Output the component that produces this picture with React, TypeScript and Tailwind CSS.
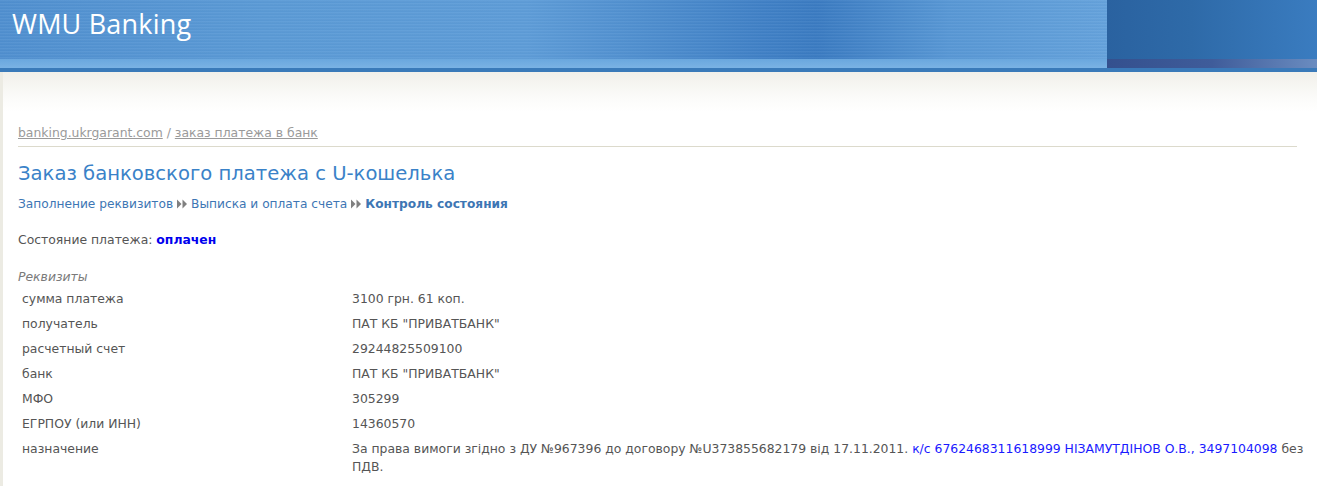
import React from "react";

const rows: [string, React.ReactNode][] = [
  ["сумма платежа", "3100 грн. 61 коп."],
  ["получатель", 'ПАТ КБ "ПРИВАТБАНК"'],
  ["расчетный счет", "29244825509100"],
  ["банк", 'ПАТ КБ "ПРИВАТБАНК"'],
  ["МФО", "305299"],
  ["ЕГРПОУ (или ИНН)", "14360570"],
  [
    "назначение",
    <>
      За права вимоги згідно з ДУ №967396 до договору №U373855682179 від 17.11.2011.{" "}
      <span className="text-[#1a1aff]">к/с 6762468311618999 НІЗАМУТДІНОВ О.В., 3497104098</span> без ПДВ.
    </>,
  ],
];

function Arrows() {
  return (
    <svg width="12" height="10" viewBox="0 0 12 10" className="inline-block mx-[3px] align-[-1px]">
      <path d="M1 0.5 L5.5 5 L1 9.5 Z" fill="#808080" />
      <path d="M6.5 0.5 L11 5 L6.5 9.5 Z" fill="#808080" />
    </svg>
  );
}

export default function App() {
  return (
    <div className="w-[1317px] h-[486px] overflow-hidden bg-white font-['DejaVu_Sans',Verdana,sans-serif]">
      <div className="relative h-[68px] bg-[linear-gradient(90deg,#4f8fd0_0%,#5a9ad6_20%,#5d9cd8_40%,#3f80c6_58%,#3a7bc2_62%,#5797d5_72%,#64a2dc_84%,#5e9dd8_100%)]">
        <div className="absolute inset-0 bg-[repeating-linear-gradient(180deg,rgba(255,255,255,0.05)_0px,rgba(255,255,255,0.05)_1px,rgba(0,0,0,0.03)_2px,rgba(0,0,0,0)_3px)]" />
        <div className="absolute left-0 right-0 bottom-0 h-[9px] bg-[linear-gradient(180deg,#6aa7de,#7ab2e4)]" />
        <div className="absolute top-0 bottom-0 left-[1107px] right-0 bg-[linear-gradient(90deg,#2a62a0_0%,#2e6aa8_40%,#3a7cc0_100%)]">
          <div className="absolute left-0 right-0 bottom-0 h-[9px] bg-[linear-gradient(90deg,#34508e,#3f5c9a_50%,#6a8cc0)]" />
        </div>
        <div className="relative pl-[12px] pt-[4px] text-white text-[27px] leading-[40px] font-['Open_Sans',sans-serif] tracking-[0.2px]">
          WMU Banking
        </div>
      </div>
      <div className="h-[4px] bg-[#3a7ab9]" />
      <div className="border-l-[3px] border-[#ecebe3] h-[414px] bg-[linear-gradient(180deg,#f1f0ea_0px,#fbfbf9_25px,#ffffff_40px)]">
        <div className="pl-[15px] pr-[20px] pt-[51px] text-[12.4px] text-[#555555]">
          <div className="pb-[3px] border-b-[1px] border-[#dcdacc] text-[#9a9a9a] leading-[20px]">
            <span className="underline">banking.ukrgarant.com</span> / <span className="underline">заказ платежа в банк</span>
          </div>
          <div className="mt-[13px] text-[19.6px] leading-[28px] text-[#3a82c8]">Заказ банковского платежа с U-кошелька</div>
          <div className="mt-[6px] text-[12.2px] leading-[20px] text-[#3d76b4]">
            Заполнение реквизитов<Arrows />Выписка и оплата счета<Arrows /><b>Контроль состояния</b>
          </div>
          <div className="mt-[16px] leading-[20px] text-[#555]">
            Состояние платежа: <b className="text-[#0000ee]">оплачен</b>
          </div>
          <div className="mt-[17px] leading-[20px] italic text-[#7a7a7a]">Реквизиты</div>
          <div className="mt-[-1px] mr-[-20px] text-[#555]">
            {rows.map(([k, v], i) => (
              <div key={i} className="flex leading-[18px] py-[3.5px]">
                <div className="w-[334px] pl-[4px] shrink-0">{k}</div>
                <div className="flex-1 pr-[8px]">{v}</div>
              </div>
            ))}
          </div>
        </div>
      </div>
    </div>
  );
}
